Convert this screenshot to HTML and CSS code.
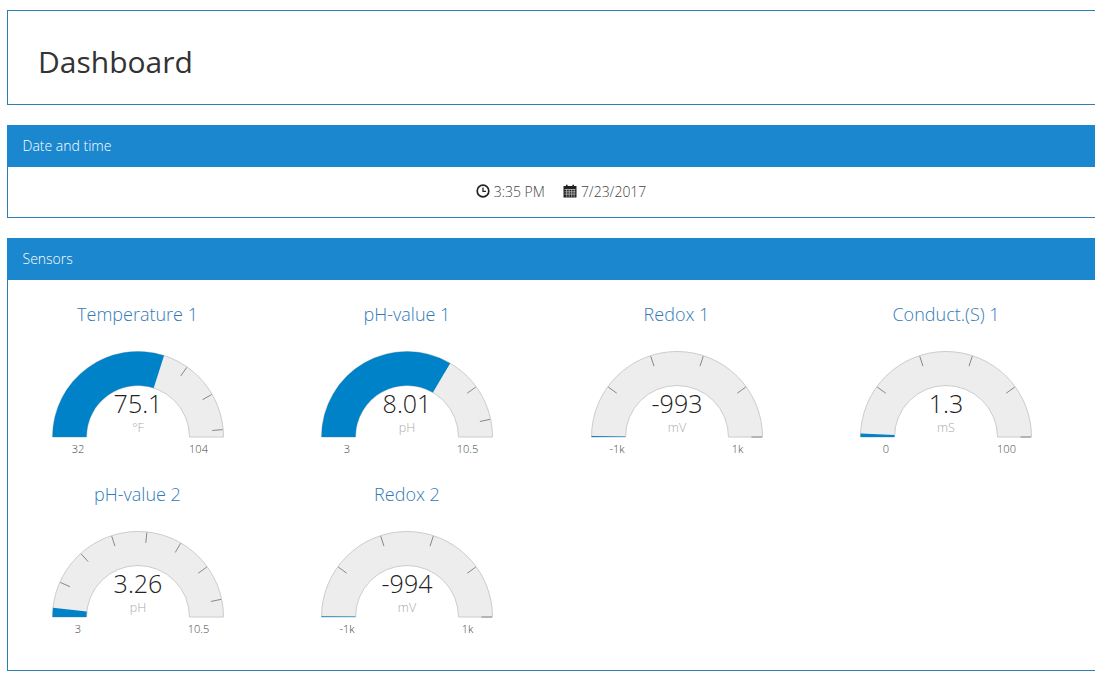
FILE: index.html
```html
<!DOCTYPE html>
<html lang="en">
<head>
  <meta charset="UTF-8" />
  <title>Dashboard</title>
  <link rel="stylesheet" href="styles.css">
</head>
<body>

  <div class="page-title">
    <h1>Dashboard</h1>
  </div>

  <div class="panel">
    <div class="panel-heading">Date and time</div>
    <div class="date-row">
      <span class="date-item">
        <svg class="icon" viewBox="0 0 14 14"><circle cx="7" cy="7" r="5.8" fill="none" stroke="#222" stroke-width="1.7"/><path d="M7 3.4V7.4H10" fill="none" stroke="#222" stroke-width="1.3"/></svg>
        3:35 PM
      </span>
      <span class="date-item">
        <svg class="icon" viewBox="0 0 14 14"><path d="M0.5 2H3V0.8H4.6V2H9.4V0.8H11V2H13.5V13.5H0.5Z" fill="#222"/><path d="M1.5 5.5H12.5M1.5 7.8H12.5M1.5 10.1H12.5M3.7 5V13M6.2 5V13M8.7 5V13M11.1 5V13" stroke="#fff" stroke-width="0.5"/></svg>
        7/23/2017
      </span>
    </div>
  </div>

  <div class="panel">
    <div class="panel-heading">Sensors</div>
    <div id="gauges" class="gauges"></div>
  </div>

  <script src="script.js"></script>
</body>
</html>
```

FILE: styles.css
```css
html, body { overflow: hidden; }
body { margin: 0; padding: 10px 0 0 7px; height: 679px; box-sizing: border-box; font-family: "Open Sans", Arial, sans-serif; font-size: 14px; color: #333; background: #fff; }

.page-title { width: 1108px; box-sizing: border-box; height: 95px; margin-bottom: 20px; padding: 8px 0 0 30px; border: 1px solid #2a80b0; display: flex; align-items: center; }
h1 { margin: 0; font-size: 30px; font-weight: 400; color: #333; }

.panel { width: 1108px; box-sizing: border-box; margin-bottom: 20px; border: 1px solid #2a80b0; border-top: 0; }
.panel-heading { height: 42px; margin: 0 -1px; padding: 0 0 2px 15.5px; box-sizing: border-box; display: flex; align-items: center; background: #1b87ce; color: #fff; font-weight: 300; }

.date-row { height: 50px; padding-bottom: 2px; box-sizing: border-box; display: flex; justify-content: center; align-items: center; gap: 18px; font-weight: 300; color: #444; }
.date-item { display: flex; align-items: center; gap: 4px; }
.icon { width: 14px; height: 14px; }

.gauges { padding: 23px 0 7px; display: grid; grid-template-columns: repeat(4, 259px); column-gap: 10.5px; grid-auto-rows: 180px; }
.gauge { display: flex; flex-direction: column; align-items: center; }
.gauge-title { height: 24px; line-height: 22px; font-size: 18px; font-weight: 300; color: #337ab7; }
.gauge svg { display: block; width: 200px; height: 130px; }

.track { fill: #ededed; stroke: #ccc; stroke-width: 1; }
.level { fill: #0082c8; }
.tick { stroke: #888; stroke-width: 1; }
.value { font-size: 25px; font-weight: 300; fill: #222; text-anchor: middle; }
.unit { font-size: 12.5px; font-weight: 300; fill: #aaa; text-anchor: middle; }
.limit { font-size: 11px; font-weight: 300; fill: #444; text-anchor: middle; }
```

FILE: script.js
```js
const gauges = [
  { title: "Temperature 1", value: 75.1, text: "75.1", unit: "°F", min: 32, max: 104, step: 10, minText: "32", maxText: "104" },
  { title: "pH-value 1", value: 8.01, text: "8.01", unit: "pH", min: 3, max: 10.5, step: 1, minText: "3", maxText: "10.5" },
  { title: "Redox 1", value: -993, text: "-993", unit: "mV", min: -1000, max: 1000, step: 400, minText: "-1k", maxText: "1k" },
  { title: "Conduct.(S) 1", value: 1.3, text: "1.3", unit: "mS", min: 0, max: 100, step: 20, minText: "0", maxText: "100" },
  { title: "pH-value 2", value: 3.26, text: "3.26", unit: "pH", min: 3, max: 10.5, step: 1, minText: "3", maxText: "10.5" },
  { title: "Redox 2", value: -994, text: "-994", unit: "mV", min: -1000, max: 1000, step: 400, minText: "-1k", maxText: "1k" }
];

const CX = 100, CY = 110, OUTER = 85.5, INNER = 51.5;

function point(r, deg) {
  const a = deg * Math.PI / 180;
  return (CX - r * Math.cos(a)).toFixed(2) + " " + (CY - r * Math.sin(a)).toFixed(2);
}

function sector(deg) {
  return `M${point(OUTER, 0)} A${OUTER} ${OUTER} 0 0 1 ${point(OUTER, deg)} L${point(INNER, deg)} A${INNER} ${INNER} 0 0 0 ${point(INNER, 0)} Z`;
}

const box = document.getElementById("gauges");
gauges.forEach(g => {
  const span = g.max - g.min;
  let ticks = "";
  for (let v = g.min + g.step; v <= g.max; v += g.step) {
    const deg = (v - g.min) / span * 180;
    ticks += `<path class="tick" d="M${point(OUTER - 0.5, deg)} L${point(OUTER - 11, deg)}"/>`;
  }
  const level = (g.value - g.min) / span * 180;
  box.innerHTML += `<div class="gauge">
    <div class="gauge-title">${g.title}</div>
    <svg viewBox="0 0 200 130">
      <path class="track" d="${sector(180)}"/>
      ${ticks}
      <path class="level" d="${sector(level)}"/>
      <text class="value" x="${CX}" y="86">${g.text}</text>
      <text class="unit" x="${CX}" y="105">${g.unit}</text>
      <text class="limit" x="${CX - 60}" y="126">${g.minText}</text>
      <text class="limit" x="${CX + 60.5}" y="126">${g.maxText}</text>
    </svg>
  </div>`;
});
```
